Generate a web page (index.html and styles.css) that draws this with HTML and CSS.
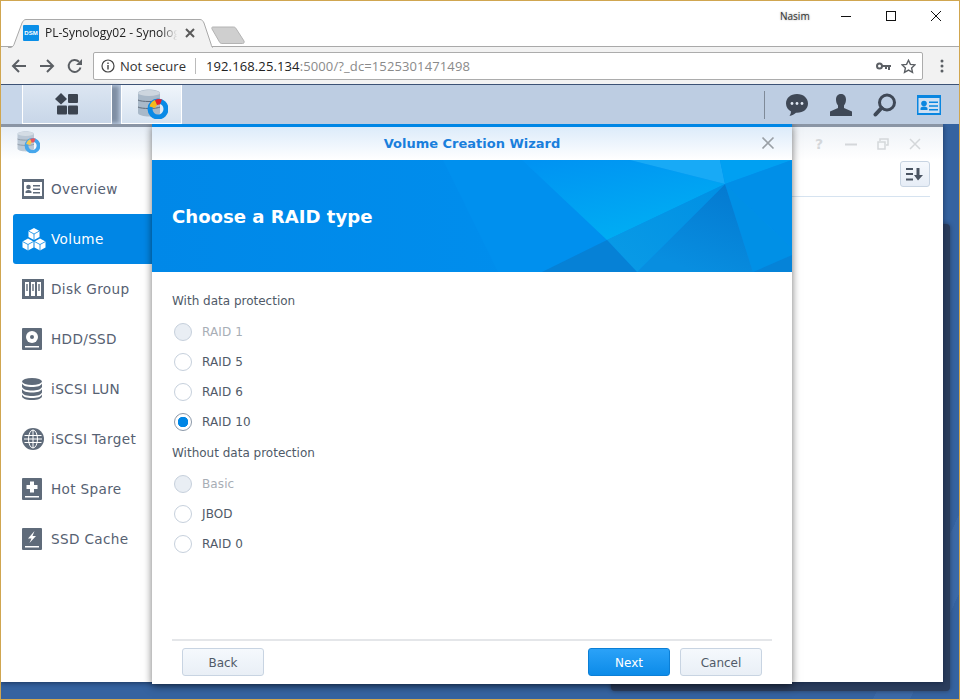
FILE: index.html
```html
<!DOCTYPE html>
<html lang="en">
<head>
<meta charset="utf-8">
<title>Volume Creation Wizard</title>
<link rel="stylesheet" href="styles.css">
</head>
<body>
<div class="frame">
  <header class="tabstrip">
    <div class="tab">
      <svg class="tab-shape" width="206" height="29" viewBox="0 0 206 29"><path d="M0 28.500h2c2 0 3-1 4-3L14 4c1-2 2-3.500 4-3.500h174c2 0 3 1.500 4 3.500l7 21c.5 2 1 3.500 2 3.500" fill="#f2f2f2" stroke="#a9a9a9"/></svg>
      <span class="favicon">DSM</span>
      <span class="tab-title">PL-Synology02 - Synolog</span>
      <svg class="tab-close" width="10" height="10" viewBox="0 0 10 10"><path d="M1 1l8 8M9 1l-8 8" stroke="#5a5a5a" stroke-width="2"/></svg>
    </div>
    <svg class="newtab" width="36" height="19" viewBox="0 0 36 19"><path d="M1.500 1h21c1 0 2 .5 2.500 1.500L33 15c.5 1.500 0 2.500-1.500 2.500H11c-1 0-2-.5-2.500-1.500L1 3c-.5-1 0-2 .5-2z" fill="#cfcfcf" stroke="#b4b4b4"/></svg>
    <span class="user">Nasim</span>
    <div class="winctl">
      <svg width="12" height="12" viewBox="0 0 12 12"><path d="M1 6.500h10" stroke="#111" stroke-width="1"/></svg>
      <svg width="12" height="12" viewBox="0 0 12 12"><rect x="1.500" y="1.500" width="9" height="9" fill="none" stroke="#111"/></svg>
      <svg width="12" height="12" viewBox="0 0 12 12"><path d="M1 1l10 10M11 1L1 11" stroke="#111"/></svg>
    </div>
  </header>

  <nav class="toolbar">
    <svg class="nav-ico" width="16" height="16" viewBox="0 0 16 16"><path d="M15 8H2M8 2L2 8l6 6" fill="none" stroke="#5b5f64" stroke-width="2"/></svg>
    <svg class="nav-ico" width="16" height="16" viewBox="0 0 16 16"><path d="M1 8h13M8 2l6 6-6 6" fill="none" stroke="#5b5f64" stroke-width="2"/></svg>
    <svg class="nav-ico" width="16" height="16" viewBox="0 0 16 16"><path d="M13.500 9.500A6 6 0 1 1 12 3.800" fill="none" stroke="#5b5f64" stroke-width="2"/><path d="M15 1v6H9z" fill="#5b5f64"/></svg>
    <div class="omnibox">
      <svg class="info" width="14" height="14" viewBox="0 0 14 14"><circle cx="7" cy="7" r="6" fill="none" stroke="#444" stroke-width="1.200"/><path d="M7 6v4.500M7 3.500v1.500" stroke="#444" stroke-width="1.400"/></svg>
      <span class="secure">Not secure</span>
      <span class="sep"></span>
      <span class="url">192.168.25.134<span class="url-rest">:5000/?_dc=1525301471498</span></span>
      <svg class="key" width="15" height="9" viewBox="0 0 15 9"><circle cx="3.500" cy="4" r="2.500" fill="none" stroke="#5b5f64" stroke-width="2"/><path d="M6 3h9v2h-1v3h-2V5h-1v2H9V5H6z" fill="#5b5f64"/></svg>
      <svg class="star" width="15" height="15" viewBox="0 0 15 15"><path d="M7.500 1.300l1.900 4.100 4.500.5-3.300 3 .9 4.500-4-2.300-4 2.300.9-4.500-3.300-3 4.500-.5z" fill="none" stroke="#5b5f64" stroke-width="1.400"/></svg>
    </div>
    <svg class="menu" width="4" height="14" viewBox="0 0 4 14"><circle cx="2" cy="2" r="1.500" fill="#5b5f64"/><circle cx="2" cy="7" r="1.500" fill="#5b5f64"/><circle cx="2" cy="12" r="1.500" fill="#5b5f64"/></svg>
  </nav>

  <div class="taskbar">
    <div class="stub"></div>
    <div class="tbtn tbtn-main">
      <svg width="24" height="22" viewBox="0 0 24 22"><path d="M6 0l6 6-6 5.500L0 6z" fill="#3c4450"/><rect x="13" y="1" width="10" height="9" rx="1" fill="#3c4450"/><rect x="2" y="12.500" width="10" height="9" rx="1" fill="#3c4450"/><rect x="13" y="12.500" width="10" height="9" rx="1" fill="#3c4450"/></svg>
    </div>
    <div class="tbtn tbtn-app">
      <svg width="32" height="30" viewBox="0 0 32 30"><use href="#volapp"/></svg>
    </div>
    <div class="tray">
      <span class="tray-sep"></span>
      <svg class="tray-ico" width="24" height="24" viewBox="0 0 24 24"><path d="M12 1C5.500 1 1 5 1 10.500c0 3.500 2 6.500 5 8 0 1.500-.5 3-1.500 4.500 2.500-.5 5-1.800 6.500-3.200h1c6.500 0 11-4 11-9.300S18.500 1 12 1z" fill="#3f4856"/><circle cx="7" cy="10.500" r="1.400" fill="#dfe7f2"/><circle cx="12" cy="10.500" r="1.400" fill="#dfe7f2"/><circle cx="17" cy="10.500" r="1.400" fill="#dfe7f2"/></svg>
      <svg class="tray-ico" width="24" height="24" viewBox="0 0 24 24"><path d="M12 1c-3.500 0-5 2.500-5 5.500 0 2.500.8 4.500 2 6v2.500L1 18.500V23h22v-4.500L15 15v-2.500c1.200-1.500 2-3.500 2-6C17 3.500 15.500 1 12 1z" fill="#3f4856"/></svg>
      <svg class="tray-ico" width="24" height="24" viewBox="0 0 24 24"><circle cx="14" cy="9.500" r="7.500" fill="none" stroke="#3f4856" stroke-width="3"/><path d="M8.500 15L2.500 21.500" stroke="#3f4856" stroke-width="4" stroke-linecap="round"/></svg>
      <svg class="tray-ico" width="24" height="20" viewBox="0 0 24 20"><rect width="24" height="20" fill="#0a86e0"/><rect x="1.500" y="3" width="21" height="15" fill="#cfe0f3"/><circle cx="7" cy="8.500" r="2.800" fill="#0a86e0"/><path d="M3.500 15h7v-1.500c0-1-1-2-3.500-2s-3.500 1-3.500 2zM12 6.500h9V8h-9zM12 10.200h9v1.500h-9zM12 14h9v1.500h-9z" fill="#0a86e0"/></svg>
    </div>
  </div>

  <main class="desktop">
    <div class="back-window"></div>
    <section class="app">
      <aside class="sidebar">
        <div class="app-head">
          <svg width="24" height="24" viewBox="0 0 32 30" class="faded"><use href="#volapp"/></svg>
        </div>
        <ul class="menu-list">
          <li class="item">
            <svg width="22" height="20" viewBox="0 0 22 20"><rect width="22" height="20" fill="#5f6b7a"/><rect x="2" y="3" width="18" height="14" fill="#fff"/><circle cx="6.500" cy="8" r="2.300" fill="#5f6b7a"/><path d="M3.500 14h6v-1c0-1-1-2-3-2s-3 1-3 2zM11 6h7v1.500h-7zM11 9.500h7V11h-7zM11 13h7v1.500h-7z" fill="#5f6b7a"/></svg>
            <span>Overview</span>
          </li>
          <li class="item active">
            <svg width="24" height="24" viewBox="0 0 24 24"><path d="M12 1l5.500 3v6L12 13 6.500 10V4zM6 11.500l5.500 3v6L6 23.500.500 20.500v-6zM18 11.500l5.500 3v6l-5.500 3-5.500-3v-6z" fill="#fff"/><path d="M6.500 4l5.500 3 5.500-3M12 7v6M.5 14.500l5.500 3 5.500-3M6 17.500v6M12.500 14.500l5.500 3 5.500-3M18 17.500v6" fill="none" stroke="#0086e5" stroke-width=".8"/></svg>
            <span>Volume</span>
          </li>
          <li class="item">
            <svg width="22" height="20" viewBox="0 0 22 20"><rect width="22" height="20" fill="#5f6b7a"/><path d="M3 3h4v14H3zM9 3h4v14H9zM15 3h4v14h-4z" fill="#fff"/><path d="M4.300 5h1.400v7H4.300zM10.300 5h1.400v7h-1.400zM16.300 5h1.400v7h-1.400z" fill="#5f6b7a"/></svg>
            <span>Disk Group</span>
          </li>
          <li class="item">
            <svg width="20" height="22" viewBox="0 0 20 22"><rect width="20" height="22" rx="1" fill="#5f6b7a"/><circle cx="10" cy="9" r="6" fill="#fff"/><circle cx="10" cy="9" r="2" fill="#5f6b7a"/><rect x="3" y="18" width="14" height="1.500" fill="#fff"/></svg>
            <span>HDD/SSD</span>
          </li>
          <li class="item">
            <svg width="20" height="22" viewBox="0 0 20 22"><ellipse cx="10" cy="3.500" rx="10" ry="3.500" fill="#5f6b7a"/><path d="M0 5.500C1 8 5 9 10 9s9-1 10-3.500V9c-1 2.500-5 3.500-10 3.500S1 11.500 0 9zM0 11c1 2.500 5 3.500 10 3.500S19 13.500 20 11v3.500C19 17 15 18 10 18S1 17 0 14.500zM0 16.500C1 19 5 20 10 20s9-1 10-3.500V18c0 2.500-4 4-10 4S0 20.500 0 18z" fill="#5f6b7a"/></svg>
            <span>iSCSI LUN</span>
          </li>
          <li class="item">
            <svg width="22" height="22" viewBox="0 0 22 22"><circle cx="11" cy="11" r="11" fill="#5f6b7a"/><g fill="none" stroke="#fff" stroke-width="1"><ellipse cx="11" cy="11" rx="4.500" ry="9"/><path d="M11 2v18M2.500 7.500h17M2 11h18M2.500 14.500h17"/></g></svg>
            <span>iSCSI Target</span>
          </li>
          <li class="item">
            <svg width="20" height="22" viewBox="0 0 20 22"><rect width="20" height="22" rx="1" fill="#5f6b7a"/><path d="M8 3.500h4V7h3.500v4H12v3.500H8V11H4.500V7H8z" fill="#fff"/><rect x="3" y="18" width="14" height="1.500" fill="#fff"/></svg>
            <span>Hot Spare</span>
          </li>
          <li class="item">
            <svg width="20" height="22" viewBox="0 0 20 22"><rect width="20" height="22" rx="1" fill="#5f6b7a"/><path d="M12.500 3L6 10.500h3.500L7.500 15 14 8h-3.500z" fill="#fff"/><rect x="3" y="18" width="14" height="1.500" fill="#fff"/></svg>
            <span>SSD Cache</span>
          </li>
        </ul>
      </aside>
      <div class="app-main">
        <div class="app-titlebar">
          <span class="help">?</span>
          <svg width="12" height="12" viewBox="0 0 12 12"><path d="M0 6.500h12" stroke="#d4d7da" stroke-width="2"/></svg>
          <svg width="12" height="12" viewBox="0 0 12 12"><path d="M3 3V1h8v6H9M1 4h7v7H1z" fill="none" stroke="#d4d7da" stroke-width="1.500"/></svg>
          <svg width="12" height="12" viewBox="0 0 12 12"><path d="M1 1l10 10M11 1L1 11" stroke="#d4d7da" stroke-width="1.500"/></svg>
        </div>
        <div class="app-tools">
          <button class="sort" type="button">
            <svg width="18" height="13" viewBox="0 0 18 13"><path d="M0 0h7v2H0zM0 5h7v2H0zM0 10.500h7v2H0zM10.500 0h3v7H17l-5 5.500L8 7h2.500z" fill="#4a5462"/></svg>
          </button>
        </div>
      </div>
    </section>

    <section class="wizard">
      <header class="wiz-title">
        <h2>Volume Creation Wizard</h2>
        <svg class="wiz-close" width="14" height="14" viewBox="0 0 14 14"><path d="M1.500 1.500l11 11M12.500 1.500l-11 11" stroke="#9aa0a6" stroke-width="1.700"/></svg>
      </header>
      <div class="hero">
        <svg class="hero-art" width="640" height="112" viewBox="0 0 640 112">
          <defs>
            <linearGradient id="hb" x1="0" y1="0" x2="1" y2="0"><stop offset="0" stop-color="#0088e8"/><stop offset=".6" stop-color="#008eed"/><stop offset="1" stop-color="#0092f0"/></linearGradient>
            <linearGradient id="bright" x1="0.100" y1="0" x2=".6" y2="1"><stop offset="0" stop-color="#0093f2"/><stop offset="1" stop-color="#00aff3"/></linearGradient>
            <linearGradient id="mid" x1="0" y1="1" x2="1" y2="0"><stop offset="0" stop-color="#0a9be6"/><stop offset="1" stop-color="#0090e4"/></linearGradient>
            <linearGradient id="deep" x1="1" y1="0" x2=".5" y2="1"><stop offset="0" stop-color="#0478cf"/><stop offset="1" stop-color="#088ee0"/></linearGradient>
          </defs>
          <rect width="640" height="112" fill="url(#hb)"/>
          <polygon points="291,0 370,0 455,80 390,112 346,112" fill="#0090ee"/>
          <polygon points="370,0 478,0 573,24 455,80" fill="url(#bright)"/>
          <polygon points="478,0 568,0 573,24" fill="#18aaf6"/>
          <polygon points="568,0 640,0 573,24" fill="#00a0f2"/>
          <polygon points="573,24 640,0 640,88" fill="#008fe8"/>
          <polygon points="573,24 640,88 640,95 601,112" fill="#0090e6"/>
          <polygon points="573,24 601,112 485,112" fill="url(#deep)"/>
          <polygon points="573,24 485,112 455,80" fill="url(#mid)"/>
          <polygon points="455,80 485,112 390,112" fill="#0681d6"/>
          <polygon points="640,95 640,112 601,112" fill="#0583d8"/>
        </svg>
        <h1>Choose a RAID type</h1>
      </div>
      <form class="wiz-body">
        <p class="group">With data protection</p>
        <label class="radio disabled"><i class="dot"></i>RAID 1</label>
        <label class="radio"><i class="dot"></i>RAID 5</label>
        <label class="radio"><i class="dot"></i>RAID 6</label>
        <label class="radio checked"><i class="dot"></i>RAID 10</label>
        <p class="group group-2">Without data protection</p>
        <label class="radio disabled"><i class="dot"></i>Basic</label>
        <label class="radio"><i class="dot"></i>JBOD</label>
        <label class="radio"><i class="dot"></i>RAID 0</label>
      </form>
      <footer class="wiz-foot">
        <button class="btn" type="button">Back</button>
        <span class="spacer"></span>
        <button class="btn primary" type="button">Next</button>
        <button class="btn" type="button">Cancel</button>
      </footer>
    </section>
  </main>
</div>

<svg class="defs" width="0" height="0">
  <symbol id="volapp" viewBox="0 0 32 30">
    <path d="M2 4c0-2 6-3.500 11-3.500S24 2 24 4v20c0 2-6 3.500-11 3.500S2 26 2 24z" fill="#a9b9c9"/>
    <ellipse cx="13" cy="4" rx="11" ry="3" fill="#cdd6df"/>
    <path d="M2 11c3 2 19 2 22 0M2 18c3 2 19 2 22 0" fill="none" stroke="#5f6b7a" stroke-width="1"/>
    <circle cx="22" cy="20" r="8" fill="none" stroke="#0a8ae6" stroke-width="5"/>
    <path d="M13.500 17.500A9 9 0 0 1 19 11l2.500 5a4 4 0 0 0-2.500 3z" fill="#f5b91c"/>
    <path d="M19 11a9 9 0 0 1 7-.5l-2 5a4 4 0 0 0-3 .5z" fill="#e8202a"/>
  </symbol>
</svg>
</body>
</html>
```

FILE: styles.css
```css
* { box-sizing: border-box; }
html, body { margin: 0; padding: 0; }
body { width: 960px; height: 700px; overflow: hidden; font-family: "DejaVu Sans", sans-serif; font-size: 12px; }
.defs { position: absolute; }

.frame {
  width: 960px; height: 700px;
  display: flex; flex-direction: column;
  border: 1px solid #d0a650;
  background: #fff;
}

/* Tab strip */
.tabstrip { position: relative; height: 46px; flex: none; background: #fff; box-shadow: inset 0 -1px 0 #a9a9a9; display: flex; align-items: flex-start; }
.tab { position: relative; margin: 18px 0 0 7px; width: 206px; height: 28px; display: flex; align-items: center; padding-left: 15px; }
.tab-shape { position: absolute; left: 0; top: 0; }
.favicon { position: relative; width: 16px; height: 16px; background: #0a8fe8; border-radius: 1px; color: #fff; font: 700 6px/16px "Liberation Sans", sans-serif; text-align: center; margin-right: 6px; }
.tab-title { position: relative; flex: none; white-space: nowrap; font: 12px/16px "Open Sans", sans-serif; color: #222; -webkit-mask-image: linear-gradient(90deg, #000 86%, transparent 98%); mask-image: linear-gradient(90deg, #000 86%, transparent 98%); }
.tab-close { position: absolute; left: 177px; top: 9px; }
.newtab { margin: 25px 0 0 -3px; flex: none; }
.user { margin: 8px 0 0 533px; font: 10px/14px "Open Sans", sans-serif; color: #333; text-shadow: 0 0 2px #999; flex: none; }
.winctl { margin: 9px 0 0 30px; display: flex; gap: 33px; flex: none; }

/* Toolbar */
.toolbar { height: 38px; flex: none; background: #f2f2f2; display: flex; align-items: center; padding: 1px 0 0 10px; border-bottom: 1px solid #3c5275; }
.nav-ico { margin-right: 12px; flex: none; }
.omnibox { margin-left: -2px; width: 830px; height: 28px; background: #fff; border: 1px solid #acacac; border-radius: 2px; display: flex; align-items: center; padding-left: 7px; }
.secure { margin-left: 5px; font: 13px/16px "Open Sans", sans-serif; color: #333; }
.sep { width: 1px; height: 16px; background: #bbb; margin: 0 10px 0 9px; }
.url { font: 13px/16px "Open Sans", sans-serif; color: #222; flex: 1; letter-spacing: .12px; }
.url-rest { color: #8a8a8a; }
.key { margin-right: 10px; }
.star { margin-right: 6px; }
.menu { margin-left: 17px; }

/* DSM taskbar */
.taskbar { height: 39px; flex: none; background: #bdcde2; display: flex; align-items: stretch; }
.stub { width: 22px; background: #c7d6e9; border-right: 1px solid #fff; }
.tbtn { display: flex; align-items: center; justify-content: center; border: 1px solid #fff; border-top: 0; }
.tbtn-main { width: 89px; background: linear-gradient(180deg, #dce6f2, #c8d6e8); box-shadow: 8px 0 4px -1px #7f8fa4; margin-right: 9px; border-left: 0; }
.tbtn-app { width: 61px; background: linear-gradient(180deg, #f0f5fb, #d6e2f0); }
.tray { flex: 1; display: flex; align-items: center; justify-content: flex-end; padding-right: 18px; }
.tray-sep { width: 1px; height: 28px; background: #7f8a98; margin-right: 20px; }
.tray-ico { margin-left: 20px; flex: none; }
.tray-sep + .tray-ico { margin-left: 0; }

/* Desktop + app window */
.desktop { position: relative; flex: 1; background: linear-gradient(115deg, #3563a0 0 93%, #3b69a6 93% 96%, #3563a0 96%); overflow: hidden; }
.back-window { position: absolute; left: 610px; top: 100px; width: 339px; height: 467px; background: #2b3d5c; border-radius: 4px; box-shadow: 0 0 4px #2b3d5c; }
.app { position: relative; width: 942px; height: 558px; background: #fff; display: flex; border-top: 3px solid #8a95a5; box-shadow: 0 1px 5px rgba(15, 30, 60, .7); }
.sidebar { width: 151px; flex: none; }
.app-head { height: 33px; padding: 3px 0 0 15px; background: linear-gradient(180deg, #e6eef7, #fff); }
.faded { opacity: .75; display: block; }
.menu-list { list-style: none; margin: 4px 0 0; padding: 0 0 0 12px; }
.item { height: 50px; display: flex; align-items: center; color: #566172; font-size: 13.600px; letter-spacing: .35px; padding-left: 9px; }
.item svg { flex: none; }
.item > span { position: absolute; left: 50px; }
.item.active { background: #0086e5; color: #fff; border-radius: 3px 0 0 3px; }
.app-main { flex: 1; display: flex; flex-direction: column; }
.app-titlebar { height: 33px; background: linear-gradient(180deg, #eef2f7, #fff); display: flex; align-items: center; justify-content: flex-end; gap: 20px; padding-right: 22px; }
.help { color: #d4d7da; font-size: 14px; font-weight: 700; line-height: 12px; margin-right: 2px; }
.app-tools { height: 37px; margin-right: 13px; border-bottom: 1px solid #d6e3f0; display: flex; justify-content: flex-end; align-items: flex-start; padding-top: 1px; }
.sort { width: 30px; height: 26px; padding: 0; background: linear-gradient(180deg, #f6f9fd, #e6edf6); border: 1px solid #c8d4e2; border-radius: 3px; display: flex; align-items: center; justify-content: center; }

/* Wizard */
.wizard { position: absolute; left: 151px; top: 0; width: 640px; height: 560px; background: #fff; border-top: 3px solid #0086e5; box-shadow: 0 2px 8px rgba(0, 0, 0, .55); display: flex; flex-direction: column; }
.wiz-title { height: 33px; flex: none; background: linear-gradient(180deg, #dcebfa, #fff); display: flex; align-items: center; justify-content: center; position: relative; }
.wiz-title h2 { margin: 0; font-size: 13px; font-weight: 700; color: #1a7fdc; }
.wiz-close { position: absolute; right: 17px; top: 9px; }
.hero { position: relative; height: 112px; flex: none; display: flex; align-items: center; padding-left: 20px; overflow: hidden; }
.hero-art { position: absolute; left: 0; top: 0; }
.hero h1 { position: relative; margin: 0; font-size: 18.100px; font-weight: 700; color: #fff; }
.wiz-body { flex: 1; padding: 19px 20px 0; display: flex; flex-direction: column; }
.group { margin: 0; height: 26px; line-height: 20px; color: #505a68; font-size: 12px; flex: none; }
.group-2 { height: 32px; line-height: 32px; }
.radio { height: 30px; flex: none; display: flex; align-items: center; color: #505a68; font-size: 12px; letter-spacing: .1px; }
.dot { width: 18px; height: 18px; border: 1px solid #c6d0dc; border-radius: 50%; margin: 0 10px 0 2px; background: #fff; display: block; flex: none; }
.disabled { color: #a8aeb6; }
.disabled .dot { background: #e9eef4; }
.checked .dot { border-color: #8b98a8; background: radial-gradient(circle, #0086e5 0 5px, #fff 5.500px); }
.wiz-foot { height: 45px; flex: none; margin: 0 20px; border-top: 2px solid #e4e6e9; display: flex; align-items: flex-start; gap: 10px; padding: 7px 10px 0; }
.spacer { flex: 1; }
.btn { width: 82px; height: 28px; padding: 1px 0 0; font: 12px "DejaVu Sans", sans-serif; color: #505a68; background: linear-gradient(180deg, #f5f9fd, #e9eff6); border: 1px solid #c8d4e2; border-radius: 3px; }
.btn.primary { background: linear-gradient(180deg, #2ba2f8, #0c8be8); border-color: #0b7fd6; color: #fff; }
```
